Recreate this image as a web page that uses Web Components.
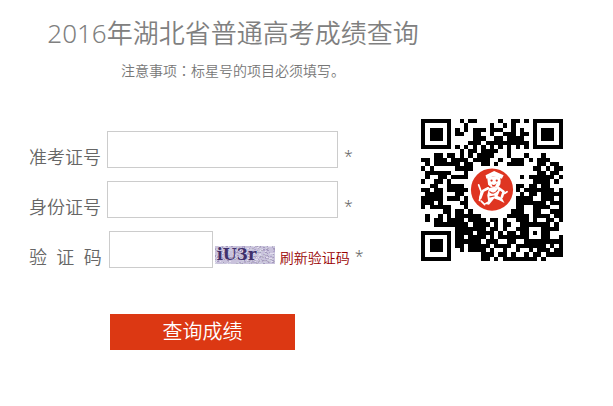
<!DOCTYPE html>
<html lang="zh-CN">
<head>
<meta charset="utf-8">
<title>2016年湖北省普通高考成绩查询</title>
<style>
body{margin:0;background:#fff;font-family:"Noto Sans","Noto Sans CJK SC",sans-serif;color:#666}
.colon{font-family:"Noto Sans CJK TC",sans-serif}
</style>
</head>
<body>
<score-page>
  <page-heading slot="heading">2016年湖北省普通高考成绩查询<span slot="note">注意事项<span class="colon" lang="zh-Hant">：</span>标星号的项目必须填写。</span></page-heading>
  <score-form></score-form>
  <qr-code slot="aside"></qr-code>
</score-page>
<script>
class ScorePage extends HTMLElement{
  constructor(){super();this.attachShadow({mode:'open'}).innerHTML=`
<style>
:host{display:block;padding:13px 0 24px}
main{display:flex;align-items:flex-start;gap:54px;padding-left:29px}
</style>
<slot name="heading"></slot>
<main><slot></slot><slot name="aside"></slot></main>`}
}
class PageHeading extends HTMLElement{
  constructor(){super();this.attachShadow({mode:'open'}).innerHTML=`
<style>
:host{display:block;max-width:466px;text-align:center;color:#808080;padding-bottom:49px}
h1{margin:0 0 6px;font-size:26px;font-weight:350;line-height:40px;white-space:nowrap}
p{margin:0;font-size:14px;font-weight:350;line-height:22px;color:#777}
</style>
<h1><slot></slot></h1><p><slot name="note"></slot></p>`}
}
class FormField extends HTMLElement{
  constructor(){super();const a=n=>this.getAttribute(n);
  this.attachShadow({mode:'open'}).innerHTML=`
<style>
:host{display:flex;align-items:flex-end;gap:6px;color:#666}
:host([short]){gap:7px}
label{font-size:18px;font-weight:350;line-height:22px;white-space:pre}
input{box-sizing:border-box;width:231px;height:37px;border:1px solid #ccc;border-radius:0;padding:0 8px;margin:0;background:#fff;font:16px "Noto Sans",sans-serif;color:#444}
:host([short]) input{width:104px}
::slotted(*){flex:none}
.star{font-size:16px;font-weight:350;line-height:24px}
</style>
<label for="f">${a('label')}</label><input id="f" type="text" name="${a('name')}" required><slot></slot><span class="star">*</span>`}
}
class CaptchaImage extends HTMLElement{
  constructor(){super();
  let s=7,dots='';const r=()=>(s=(s*16807)%2147483647)/2147483647;
  const colours=['#b0a5cc','#e4def0','#a499be','#cfd2df','#b4afc2'];
  for(let i=0;i<360;i++)dots+=`<rect x="${Math.floor(r()*60)}" y="${Math.floor(r()*18)}" width="${1+Math.floor(r()*2)}" height="1" fill="${colours[Math.floor(r()*5)]}"/>`;
  this.attachShadow({mode:'open'}).innerHTML=`
<style>
:host{display:grid;width:60px;height:18px;margin:0 -2px 4px -5px;background:#c9c2dc;overflow:hidden}
svg,span{grid-area:1/1}
span{z-index:1;padding-left:2px;font:bold 16px/18px "DejaVu Serif",serif;color:#40306c}
</style>
<svg width="60" height="18" shape-rendering="crispEdges" aria-hidden="true">${dots}</svg><span>iU3r</span>`}
}
class RefreshLink extends HTMLElement{
  constructor(){super();this.attachShadow({mode:'open'}).innerHTML=`
<style>
:host{display:block;margin-right:-2px}
a{display:block;color:#900;text-decoration:none;font-size:14px;font-weight:350;line-height:20px;white-space:nowrap}
</style><a href="#"><slot></slot></a>`}
}
class ScoreForm extends HTMLElement{
  constructor(){super();this.attachShadow({mode:'open'}).innerHTML=`
<style>
:host{display:block;flex:0 1 338px;min-width:0}
form{display:grid;gap:13px;margin:0}
button{justify-self:start;margin:33px 0 0 81px;width:185px;height:36px;border:0;padding:0;background:#dc3813;color:#fff;font:350 20px/36px "Noto Sans","Noto Sans CJK SC",sans-serif;cursor:pointer}
</style>
<form onsubmit="return false">
<form-field name="exam" label="准考证号"></form-field>
<form-field name="identity" label="身份证号"></form-field>
<form-field name="captcha" short label="验&nbsp;&nbsp;证&nbsp;&nbsp;码"><captcha-image></captcha-image><refresh-link>刷新验证码</refresh-link></form-field>
<button type="submit">查询成绩</button>
</form>`}
}
const MODULES=[
'000000000101100000100110100000000',
'000000000010000010010100000000000',
'000000001010111011100101000000000',
'000000001100110010011101100000000',
'000000000000111001101111000000000',
'000000000001110111111111100000000',
'000000001010101010101010100000000',
'000000000101101111001000000000000',
'000110110101011110001000100010000',
'110111011110111100100111010111000',
'010111111011001101001111000110110',
'101000001111011000110000001101011',
'011111100010110110000000000110110',
'010011011111000000000101011111101',
'100110000000000000000000001111010',
'001100111100000000000011011011000',
'110110111111000000000010111111101',
'011110001101000000000001011011111',
'111110111011000000000111110011101',
'111010000111000000000011111110111',
'101111100011000000001111001111001',
'000001101101100000011111001100111',
'010010001111110000001111101111011',
'010110111101111011010011101001101',
'000111111110111101011001111111010',
'000000001111111011010011100011110',
'000000001111011110101101101011000',
'000000001101111010111111100011001',
'000000001111110111001100111111111',
'000000001101111101111011111110101',
'000000000101111010010010010111011',
'000000000000001110110100101101111',
'000000000000001101011111111010000'];
class QrCode extends HTMLElement{
  constructor(){super();let d='';
  MODULES.forEach((row,y)=>{for(let x=0;x<33;x++)if(row[x]==='1')d+=`M${x} ${y}h1v1h-1z`});
  for(let i=8;i<25;i+=2)d+=`M6 ${i}h1v1h-1z`;
  const finder=(x,y)=>`<path transform="translate(${x} ${y})" fill-rule="evenodd" d="M0 0h7v7h-7zM1 1v5h5v-5zM2 2h3v3h-3z"/>`;
  this.attachShadow({mode:'open'}).innerHTML=`
<style>
:host{display:block;flex:none;width:142px;margin-top:-12px}
svg{display:block;width:100%;height:auto}
</style>
<svg viewBox="0 0 33 33" role="img" aria-label="二维码">
<g shape-rendering="crispEdges"><path d="${d}"/>${finder(0,0)}${finder(26,0)}${finder(0,26)}
<path fill="#fff" d="M24 24h5v5h-5z"/><path fill-rule="evenodd" d="M24 24h5v5h-5zM25 25v3h3v-3zM26 26h1v1h-1z"/>
<path fill="#fff" d="M12 11h9v1h1v9h-1v1h-9v-1h-1v-9h1z"/></g>
<circle cx="16.5" cy="16.4" r="4.9" fill="#df3521"/>
<g transform="translate(11.6 11.5) scale(.2)" fill="#fff" stroke="#fff" stroke-linecap="round" stroke-linejoin="round">
<path stroke="none" d="M17 8L27 3L38 8L36 12L26 9L18 12z"/>
<path stroke="none" d="M19 11Q27 7 34 11Q36 19 31 22Q24 24 20 19z"/>
<path fill="none" stroke-width="3" d="M20 23L14 26L11 34M31 22L38 27L36 33"/>
<path stroke="none" d="M21 23Q28 20 34 25L31 32L36 34L39 40L33 37L27 35L21 42L15 41L20 38L19 31z"/>
<path fill="none" stroke-width="2" d="M9 19L12 27L10 37M12 38L16 42M39 29L42 27"/>
<g fill="#df3521" stroke="none"><circle cx="24" cy="14" r="1.3"/><circle cx="30" cy="14" r="1.3"/><path d="M24 18Q27 21 30 17L28 21H25z"/></g>
<path fill="none" stroke="#df3521" stroke-width="1.3" d="M22 27Q27 31 31 25M22 33L27 32"/>
</g></svg>`}
}
customElements.define('score-page',ScorePage);
customElements.define('page-heading',PageHeading);
customElements.define('form-field',FormField);
customElements.define('captcha-image',CaptchaImage);
customElements.define('refresh-link',RefreshLink);
customElements.define('score-form',ScoreForm);
customElements.define('qr-code',QrCode);
</script>
</body>
</html>
